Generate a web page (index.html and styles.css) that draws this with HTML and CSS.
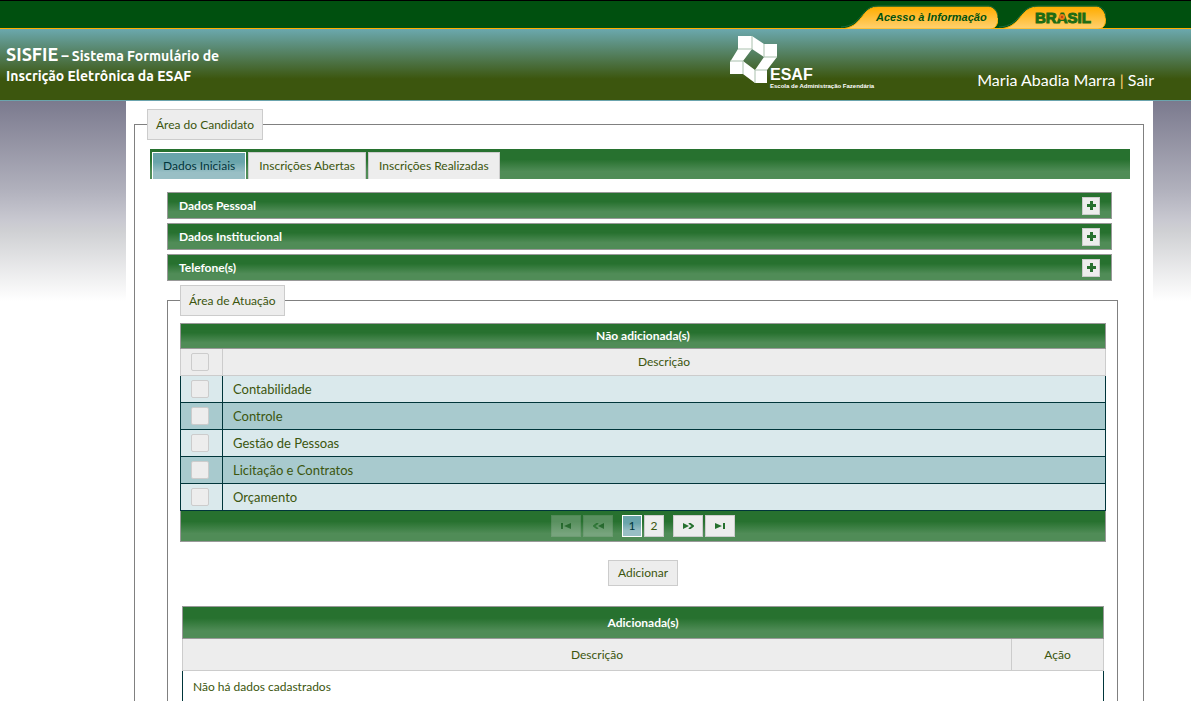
FILE: index.html
```html
<!DOCTYPE html>
<html lang="pt-BR">
<head>
<meta charset="utf-8">
<title>SISFIE</title>
<link rel="stylesheet" href="styles.css">
</head>
<body>
<div class="page">
  <nav class="gov-bar">
    <a class="gov-link" href="#" aria-label="Acesso à Informação">
      <svg width="158" height="28" viewBox="0 1 158 28">
        <defs><linearGradient id="gold" x1="0" y1="0" x2="0" y2="1"><stop offset="0" stop-color="#ffae00"/><stop offset="0.25" stop-color="#ffb51c"/><stop offset="1" stop-color="#ffd272"/></linearGradient></defs>
        <path d="M0 29C24 28 20 7 38 7H149C156 8 160 17 157 24Q155 29 150 29Z" fill="url(#gold)" stroke="#ffae00"/>
        <path d="M1 27C23 26 20 6 38 6H149C155 7 158 12 158 18" fill="none" stroke="#1c6a3a"/>
        <text class="gov-text" x="36" y="21">Acesso à Informação</text>
      </svg>
    </a>
    <a class="gov-link" href="#" aria-label="Brasil">
      <svg width="108" height="28" viewBox="0 1 108 28">
        <path d="M0 29C25 28 20 7 40 7H99C105 8 109 17 107 24Q105 29 100 29Z" fill="url(#gold)" stroke="#ffae00"/>
        <path d="M1 27C24 26 20 6 40 6H99C105 7 108 12 108 18" fill="none" stroke="#1c6a3a"/>
        <text class="brasil" x="37" y="23">BRASIL</text>
        <circle cx="64" cy="17" r="3" fill="#e87b13"/>
        <circle cx="64" cy="17" r="1" fill="#b8301c"/>
      </svg>
    </a>
  </nav>
  <header class="header">
    <h1 class="title"><span class="title-name">SISFIE</span> – Sistema Formulário de<br>Inscrição Eletrônica da ESAF</h1>
    <svg class="logo" width="150" height="56" viewBox="0 0 150 56">
      <g fill="#fff">
        <path fill-rule="evenodd" d="M8 0H22L34 8H47V21L37 34V47H25L13 38H0V26L8 13ZM22 13L13 25L25 34L34 21Z"/>
        <path d="M22 0V13M34 8V21H47M8 13H22M0 25H13V38M25 47V34H37" fill="none" stroke="#a9c0ad"/>
        <text class="logo-name" x="40" y="44">ESAF</text>
        <text class="logo-tag" x="40" y="52">Escola de Administração Fazendária</text>
      </g>
    </svg>
    <div class="user"><a href="#">Maria Abadia Marra</a> <span class="bar">|</span> <a href="#">Sair</a></div>
  </header>
  <div class="body">
    <main class="main">
      <fieldset class="group">
        <legend>Área do Candidato</legend>
        <div class="tabs-wrap">
          <div class="tabs" role="tablist">
            <button class="tab active" role="tab" aria-selected="true">Dados Iniciais</button>
            <button class="tab" role="tab">Inscrições Abertas</button>
            <button class="tab" role="tab">Inscrições Realizadas</button>
          </div>
          <div class="panel">
            <div class="accordion">
              <section class="acc-head"><h2>Dados Pessoal</h2><button class="plus" aria-label="Expandir Dados Pessoal"><svg width="9" height="9"><path d="M3 0H6V3H9V6H6V9H3V6H0V3H3Z"/></svg></button></section>
              <section class="acc-head"><h2>Dados Institucional</h2><button class="plus" aria-label="Expandir Dados Institucional"><svg width="9" height="9"><path d="M3 0H6V3H9V6H6V9H3V6H0V3H3Z"/></svg></button></section>
              <section class="acc-head"><h2>Telefone(s)</h2><button class="plus" aria-label="Expandir Telefone(s)"><svg width="9" height="9"><path d="M3 0H6V3H9V6H6V9H3V6H0V3H3Z"/></svg></button></section>
            </div>
            <fieldset class="group areas">
              <legend>Área de Atuação</legend>
              <table class="grid available">
                <colgroup><col class="col-check"><col></colgroup>
                <thead>
                  <tr class="caption"><th colspan="2">Não adicionada(s)</th></tr>
                  <tr class="heads"><th><input type="checkbox" aria-label="Selecionar todas"></th><th>Descrição</th></tr>
                </thead>
                <tbody>
                  <tr><td><input type="checkbox" id="a1"></td><td><label for="a1">Contabilidade</label></td></tr>
                  <tr><td><input type="checkbox" id="a2"></td><td><label for="a2">Controle</label></td></tr>
                  <tr><td><input type="checkbox" id="a3"></td><td><label for="a3">Gestão de Pessoas</label></td></tr>
                  <tr><td><input type="checkbox" id="a4"></td><td><label for="a4">Licitação e Contratos</label></td></tr>
                  <tr><td><input type="checkbox" id="a5"></td><td><label for="a5">Orçamento</label></td></tr>
                </tbody>
              </table>
              <div class="pager">
                <button class="step" disabled aria-label="Primeira"><svg width="10" height="6"><path d="M0 0H2V6H0ZM10 0V6L3 3Z"/></svg></button>
                <button class="step" disabled aria-label="Anterior"><svg width="11" height="6"><path d="M11 0V6L5 3Z"/><path class="line" d="M5 0L1 3L5 6"/></svg></button>
                <div class="numbers"><button class="num current" aria-current="page">1</button><button class="num">2</button></div>
                <button class="step" aria-label="Próxima"><svg width="11" height="6"><path d="M0 0V6L6 3Z"/><path class="line" d="M6 0L10 3L6 6"/></svg></button>
                <button class="step" aria-label="Última"><svg width="10" height="6"><path d="M0 0V6L7 3ZM8 0H10V6H8Z"/></svg></button>
              </div>
              <div class="actions"><button class="add">Adicionar</button></div>
              <div class="added-wrap">
                <table class="grid added">
                  <colgroup><col><col class="col-action"></colgroup>
                  <thead>
                    <tr class="caption"><th colspan="2">Adicionada(s)</th></tr>
                    <tr class="heads"><th>Descrição</th><th>Ação</th></tr>
                  </thead>
                  <tbody><tr><td colspan="2">Não há dados cadastrados</td></tr></tbody>
                </table>
              </div>
            </fieldset>
          </div>
        </div>
      </fieldset>
    </main>
  </div>
</div>
</body>
</html>
```
FILE: styles.css
```css
* { box-sizing: border-box; }
body {
  margin: 0;
  background: #fff;
  color: #3c560e;
  font: 12px/16px "Trebuchet MS", Lato, "Noto Sans", sans-serif;
}
button, input { font: inherit; color: inherit; margin: 0; padding: 0; }
button { cursor: pointer; }
a { color: inherit; text-decoration: none; }
svg { display: block; }

.page {
  height: 100vh;
  overflow: hidden;
}

.gov-bar {
  display: flex;
  justify-content: flex-end;
  height: 29px;
  padding-right: 85px;
  background: #00500f;
  border-top: 1px solid #000;
  border-bottom: 1px solid #ffae00;
}
.gov-text { font: italic bold 11px "Liberation Sans", Arial, sans-serif; fill: #00500f; }
.brasil { font: bold 15px "Liberation Sans", Arial, sans-serif; fill: #1d6b14; stroke: #1d6b14; stroke-width: 1px; }

.header {
  display: flex;
  height: 72px;
  padding: 0 37px 0 6px;
  background: linear-gradient(#6ba8ae 0, #3c560e 50px);
  border-bottom: 1px solid #6ba4ad;
  color: #fff;
}
.title {
  flex: 1;
  margin: 0;
  padding-top: 15px;
  font: bold 14px/20px Ubuntu, "Noto Sans", sans-serif;
}
.title-name { font-size: 18px; }
.logo { margin-top: 7px; }
.logo-name { font: bold 16px "Liberation Sans", Arial, sans-serif; }
.logo-tag { font: bold 6px "Liberation Sans", Arial, sans-serif; }
.user {
  width: 274px;
  padding-top: 41px;
  font-size: 16px;
  line-height: 20px;
  text-align: right;
}
.bar { color: #ffd272; }

.body {
  padding: 0 38px 0 126px;
  background: linear-gradient(#7b7a8e 0, #b0b0bc 88px, #c9c9d1 120px, #cfd0d3 130px, #fff 200px) no-repeat;
}
.main { padding: 8px 9px 8px 8px; background: #fff; }

.group {
  min-width: 0;
  margin: 0;
  padding: 0 12px 24px;
  border: 1px solid #808080;
}
legend {
  height: 31px;
  padding: 0 8px;
  background: #ededed;
  border: 1px solid #ccc;
  line-height: 30px;
}

.tabs-wrap { padding: 9px 1px 0 3px; }
.tabs {
  display: flex;
  gap: 2px;
  height: 30px;
  padding: 3px 2px 0;
}
.tabs, .acc-head, .caption, .pager {
  background: linear-gradient(#27712f 0, #27712f 35%, #508c57 75%, #508c57 100%);
}
.tab {
  height: 27px;
  padding: 0 10px;
  background: #ededed;
  border: 1px solid #ccc;
  border-bottom: 0;
}
.tab.active {
  height: 28px;
  background: linear-gradient(#69a4ab 0, #69a4ab 35%, #99bfc5 75%);
  border: 1px solid #fff;
  color: #00363c;
}

.panel { padding: 13px 12px 0 17px; }
.accordion {
  display: grid;
  gap: 4px;
  margin-right: 6px;
}
.acc-head {
  display: flex;
  align-items: center;
  justify-content: space-between;
  height: 27px;
  padding: 0 11px;
  border: 1px solid #999;
  color: #fff;
}
.acc-head h2 { margin: 0; font-size: 12px; }
.plus {
  display: grid;
  place-items: center;
  width: 18px;
  height: 18px;
  background: #ededed;
  border: 1px solid #ccc;
}
.plus svg, .step svg { fill: #27712f; }

.areas { margin-top: 4px; padding-right: 11px; }
.grid {
  width: 100%;
  table-layout: fixed;
  border-collapse: collapse;
}
.grid th, .grid td { padding: 0 10px; border: 1px solid #00353a; text-align: left; }
.grid .caption th { border-color: #999; color: #fff; text-align: center; font-weight: bold; }
.grid .heads { background: #ededed; }
.grid .heads th { border-color: #ccc; text-align: center; font-weight: normal; }

.available { margin-top: 7px; }
.available tr { height: 27px; }
.available .caption { height: 25px; }
.available td { background: #dae9ec; font-size: 13px; }
.available tr:nth-child(even) td { background: #a8cace; }
.col-check { width: 42px; }
.grid input {
  display: block;
  appearance: none;
  width: 18px;
  height: 18px;
  background: #ededed;
  border: 1px solid #ccc;
  border-radius: 2px;
}

.pager {
  display: flex;
  justify-content: center;
  gap: 2px;
  height: 31px;
  padding-top: 4px;
  border: 1px solid #999;
  border-top: 0;
}
.numbers { display: flex; gap: 2px; padding: 0 7px; }
.step, .num {
  display: grid;
  place-items: center;
  width: 30px;
  height: 22px;
  background: #ededed;
  border: 1px solid #ccc;
}
.step:disabled { opacity: 0.25; }
.step:disabled svg { fill: #003b08; }
.step .line { fill: none; stroke: #27712f; stroke-width: 2px; }
.num { width: 20px; }
.num.current {
  background: linear-gradient(#69a4ab 0, #69a4ab 35%, #99bfc5 75%);
  border-color: #fff;
  color: #00363c;
}

.actions { padding: 18px 0 20px; text-align: center; }
.add {
  height: 26px;
  padding: 0 9px;
  background: #ededed;
  border: 1px solid #ccc;
  vertical-align: top;
}
.added-wrap { padding: 0 2px; }
.added tr { height: 32px; }
.col-action { width: 92px; }
```
